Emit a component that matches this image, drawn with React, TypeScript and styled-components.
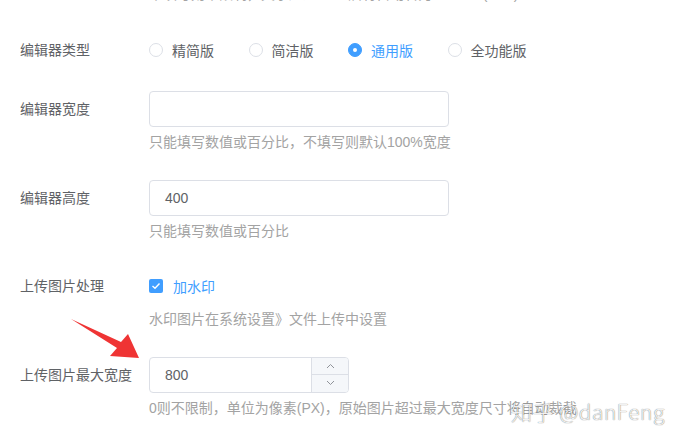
import styled, { createGlobalStyle } from 'styled-components';

const GlobalStyle = createGlobalStyle`
    html, body {
        margin: 0;
        padding: 0;
        background: #fff;
        overflow: hidden;
    }
    body {
        font-family: "Liberation Sans", "Noto Sans CJK SC", sans-serif;
        font-size: 14px;
        color: #606266;
    }
`;

const Page = styled.div`
    position: relative;
    width: 673px;
    height: 441px;
    overflow: hidden;
`;

const Form = styled.div`
    display: flex;
    flex-direction: column;
    margin-top: -15px;
`;

const TopHelp = styled.div`
    padding-left: 149px;
    height: 18px;
    line-height: 18px;
    font-size: 14px;
    color: #a3a3a3;
    margin-bottom: 29px;
    white-space: nowrap;
`;

const FormItem = styled.div<{ $gap: number }>`
    display: flex;
    align-items: flex-start;
    margin-bottom: ${p => p.$gap}px;
`;

const Label = styled.label`
    width: 149px;
    box-sizing: border-box;
    padding-left: 20px;
    height: 36px;
    line-height: 36px;
    font-size: 14px;
    color: #5f6266;
    white-space: nowrap;
`;

const Content = styled.div`
    display: flex;
    flex-direction: column;
`;

const Row = styled.div`
    display: flex;
    align-items: center;
    height: 36px;
`;

const Help = styled.div`
    margin-top: 6px;
    height: 18px;
    line-height: 18px;
    font-size: 14px;
    color: #a3a3a3;
    white-space: nowrap;
`;

const RadioOption = styled.div<{ $checked?: boolean }>`
    display: flex;
    align-items: center;
    width: 99.5px;
    font-size: 14px;
    color: ${p => (p.$checked ? '#409eff' : '#606266')};
`;

const RadioCircle = styled.span<{ $checked?: boolean }>`
    width: 14px;
    height: 14px;
    box-sizing: border-box;
    border-radius: 50%;
    border: 1px solid ${p => (p.$checked ? '#409eff' : '#dcdfe6')};
    background: ${p => (p.$checked ? '#409eff' : '#fff')};
    display: flex;
    align-items: center;
    justify-content: center;
    margin-right: 9px;

    &::after {
        content: '';
        width: 4px;
        height: 4px;
        border-radius: 50%;
        background: #fff;
        display: ${p => (p.$checked ? 'block' : 'none')};
    }
`;

const TextInput = styled.div<{ $width: number }>`
    width: ${p => p.$width}px;
    height: 36px;
    box-sizing: border-box;
    border: 1px solid #dcdfe6;
    border-radius: 4px;
    padding: 0 15px;
    line-height: 34px;
    font-size: 14px;
    color: #606266;
    background: #fff;
`;

const NumberBox = styled.div`
    display: flex;
    width: 200px;
    height: 36px;
    box-sizing: border-box;
    border: 1px solid #dcdfe6;
    border-radius: 4px;
    overflow: hidden;
`;

const NumberValue = styled.div`
    flex: 1;
    padding: 0 15px;
    line-height: 34px;
    font-size: 14px;
    color: #606266;
`;

const Controls = styled.div`
    width: 36px;
    display: flex;
    flex-direction: column;
    border-left: 1px solid #dcdfe6;
    background: #f5f7fa;
`;

const ControlButton = styled.div<{ $top?: boolean }>`
    flex: 1;
    display: flex;
    align-items: center;
    justify-content: center;
    border-bottom: ${p => (p.$top ? '1px solid #dcdfe6' : 'none')};
`;

const CheckBox = styled.span`
    width: 14px;
    height: 14px;
    border-radius: 2px;
    background: #409eff;
    display: flex;
    align-items: center;
    justify-content: center;
    margin-right: 10px;
`;

const CheckLabel = styled.span`
    font-size: 14px;
    color: #409eff;
`;

const Arrow = styled.svg`
    position: absolute;
    left: 0;
    top: 0;
    pointer-events: none;
`;

const Watermark = styled.div`
    position: absolute;
    left: 511px;
    top: 396px;
    font-family: "Noto Sans CJK SC", "Liberation Sans", sans-serif;
    font-size: 21px;
    font-weight: 300;
    letter-spacing: 0.5px;
    color: rgba(255, 255, 255, 0.92);
    text-shadow: 0 0 1px rgba(0, 0, 0, 0.45), 0 0 1px rgba(0, 0, 0, 0.3);
    white-space: nowrap;
`;

const radios = [
    { text: '精简版', checked: false },
    { text: '简洁版', checked: false },
    { text: '通用版', checked: true },
    { text: '全功能版', checked: false },
];

const Chevron = ({ up }: { up?: boolean }) => (
    <svg width="9" height="6" viewBox="0 0 9 6">
        <path
            d={up ? 'M1 5 L4.5 1.5 L8 5' : 'M1 1 L4.5 4.5 L8 1'}
            fill="none"
            stroke="#909399"
            strokeWidth="1"
        />
    </svg>
);

export default function App() {
    return (
        <Page>
            <GlobalStyle />
            <Form>
                <TopHelp>不填写则不限制，文字超过1000后将自动转为textarea(max)</TopHelp>

                <FormItem $gap={23}>
                    <Label>编辑器类型</Label>
                    <Row>
                        {radios.map(r => (
                            <RadioOption key={r.text} $checked={r.checked}>
                                <RadioCircle $checked={r.checked} />
                                {r.text}
                            </RadioOption>
                        ))}
                    </Row>
                </FormItem>

                <FormItem $gap={28.5}>
                    <Label>编辑器宽度</Label>
                    <Content>
                        <TextInput $width={300} />
                        <Help>只能填写数值或百分比，不填写则默认100%宽度</Help>
                    </Content>
                </FormItem>

                <FormItem $gap={28.5}>
                    <Label>编辑器高度</Label>
                    <Content>
                        <TextInput $width={300}>400</TextInput>
                        <Help>只能填写数值或百分比</Help>
                    </Content>
                </FormItem>

                <FormItem $gap={28.5}>
                    <Label>上传图片处理</Label>
                    <Content>
                        <Row>
                            <CheckBox>
                                <svg width="10" height="8" viewBox="0 0 10 8">
                                    <path d="M1.5 4 L4 6.3 L8.5 1.5" fill="none" stroke="#fff" strokeWidth="1.4" />
                                </svg>
                            </CheckBox>
                            <CheckLabel>加水印</CheckLabel>
                        </Row>
                        <Help>水印图片在系统设置》文件上传中设置</Help>
                    </Content>
                </FormItem>

                <FormItem $gap={0}>
                    <Label>上传图片最大宽度</Label>
                    <Content>
                        <NumberBox>
                            <NumberValue>800</NumberValue>
                            <Controls>
                                <ControlButton $top><Chevron up /></ControlButton>
                                <ControlButton><Chevron /></ControlButton>
                            </Controls>
                        </NumberBox>
                        <Help>0则不限制，单位为像素(PX)，原始图片超过最大宽度尺寸将自动裁截</Help>
                    </Content>
                </FormItem>
            </Form>

            <Arrow width="673" height="441" viewBox="0 0 673 441">
                <polygon
                    points="71,319 121,342 128,334 139,358 110,356 117,348"
                    fill="#ef3434"
                />
            </Arrow>
            <Watermark>知乎 @danFeng</Watermark>
        </Page>
    );
}
